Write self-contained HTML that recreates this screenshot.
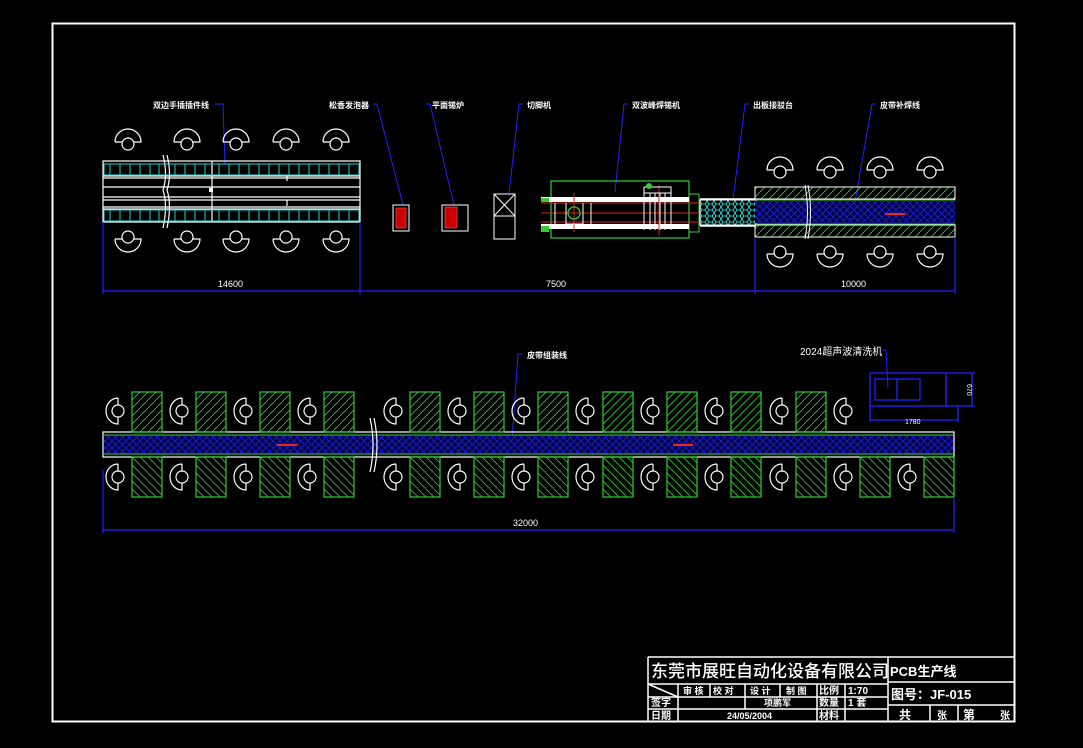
<!DOCTYPE html>
<html><head><meta charset="utf-8"><style>
html,body{margin:0;padding:0;background:#000;width:1083px;height:748px;overflow:hidden}
svg{display:block}
text{font-family:"Liberation Sans","Noto Sans CJK SC",sans-serif;fill:#fff}
.c{font-family:"Liberation Serif","Noto Serif CJK SC",serif;font-weight:bold}
</style></head><body>
<svg width="1083" height="748" viewBox="0 0 1083 748" xmlns="http://www.w3.org/2000/svg">
<defs>
<pattern id="hg" width="8" height="8" patternUnits="userSpaceOnUse"><path d="M-2 10 L10 -2" stroke="#3c3" stroke-width="0.8"/></pattern>
<pattern id="hg2" width="8" height="8" patternUnits="userSpaceOnUse"><path d="M-2 -2 L10 10" stroke="#3c3" stroke-width="0.8"/></pattern>
<pattern id="xb" width="7" height="7" patternUnits="userSpaceOnUse"><rect width="7" height="7" fill="#000040"/><path d="M0 0L7 7M7 0L0 7" stroke="#2020e0" stroke-width="0.8"/></pattern>
<pattern id="hex" width="7" height="6" patternUnits="userSpaceOnUse"><path d="M0 3 L2 0 L5 0 L7 3 L5 6 L2 6 Z" fill="none" stroke="#3ee" stroke-width="0.8"/></pattern>
<g id="hu" fill="none" stroke="#fff" stroke-width="1.2"><path d="M-13 2 A13 13 0 0 1 13 2 L6 2 M-13 2 L-6 2"/><circle cx="0" cy="4" r="6"/></g>
<g id="hd" fill="none" stroke="#fff" stroke-width="1.2"><path d="M-13 -2 A13 13 0 0 0 13 -2 L6 -2 M-13 -2 L-6 -2"/><circle cx="0" cy="-4" r="6"/></g>
<g id="hc" fill="none" stroke="#fff" stroke-width="1.2"><path d="M3 -13 A12 13 0 0 0 3 13 L3 6 M3 -13 L3 -6"/><circle cx="3" cy="0" r="6"/></g>
<rect id="gt" width="30" height="40" fill="url(#hg)" stroke="#3c3" stroke-width="1.2"/>
<rect id="gb" width="30" height="40" fill="url(#hg2)" stroke="#3c3" stroke-width="1.2"/>
</defs>
<rect x="52.5" y="23.5" width="962" height="698" fill="none" stroke="#fff" stroke-width="2"/>

<g font-size="8" class="c">
<text x="153" y="108">双边手插插件线</text>
<text x="329" y="108">松香发泡器</text>
<text x="432" y="108">平面锡炉</text>
<text x="527" y="108">切脚机</text>
<text x="632" y="108">双波峰焊锡机</text>
<text x="753" y="108">出板接驳台</text>
<text x="880" y="108">皮带补焊线</text>
<text x="527" y="358">皮带组装线</text>
</g>
<text x="800" y="355" font-size="10">2024超声波清洗机</text>
<g stroke="#22f" stroke-width="1" fill="none">
<path d="M215 104 L223 104 L225 165"/><path d="M373 104 L377 104 L403 205"/><path d="M426 104 L430 104 L454 205"/>
<path d="M523 104 L519 104 L509 194"/><path d="M628 104 L624 104 L615 192"/><path d="M749 104 L745 104 L733 200"/>
<path d="M876 104 L872 104 L855 202"/><path d="M522 354 L518 354 L512 440"/><path d="M882 350 L886 350 L888 388"/>
</g>

<g fill="none" stroke="#fff" stroke-width="1.2">
<rect x="103" y="161" width="257" height="61"/>
<path d="M103 176H360M103 178H360M103 187H360M103 197H360M103 200H360M103 207H360M103 209H360"/>
<path d="M212 161V222M287 175V181M287 200V206"/>
<path d="M163 155 Q168 175 163 190 Q168 205 163 228M167 155 Q172 175 167 190 Q172 205 167 228"/>
</g>
<rect x="104" y="164" width="255" height="11" fill="none" stroke="#2cc"/>
<rect x="104" y="210" width="255" height="11" fill="none" stroke="#2cc"/>
<g stroke="#2cc"><path d="M110 164v11M120 164v11M130 164v11M140 164v11M150 164v11M159 164v11M175 164v11M185 164v11M195 164v11M205 164v11M219 164v11M229 164v11M239 164v11M249 164v11M259 164v11M269 164v11M279 164v11M289 164v11M299 164v11M309 164v11M319 164v11M329 164v11M339 164v11M349 164v11"/>
<path d="M110 210v11M120 210v11M130 210v11M140 210v11M150 210v11M159 210v11M175 210v11M185 210v11M195 210v11M205 210v11M219 210v11M229 210v11M239 210v11M249 210v11M259 210v11M269 210v11M279 210v11M289 210v11M299 210v11M309 210v11M319 210v11M329 210v11M339 210v11M349 210v11"/></g>
<rect x="209" y="188" width="4" height="4" fill="#fff"/>
<use href="#hu" x="128" y="140"/><use href="#hu" x="187" y="140"/><use href="#hu" x="236" y="140"/><use href="#hu" x="286" y="140"/><use href="#hu" x="336" y="140"/>
<use href="#hd" x="128" y="241"/><use href="#hd" x="187" y="241"/><use href="#hd" x="236" y="241"/><use href="#hd" x="286" y="241"/><use href="#hd" x="336" y="241"/>

<rect x="393" y="205" width="16" height="26" fill="none" stroke="#fff"/><rect x="396" y="208" width="10" height="20" fill="#c00" stroke="#f55" stroke-width="0.6"/>
<rect x="442" y="205" width="26" height="26" fill="none" stroke="#fff"/><rect x="445" y="207" width="12" height="21" fill="#c00" stroke="#f55" stroke-width="0.6"/>
<g fill="none" stroke="#fff"><rect x="494" y="194" width="21" height="45"/><path d="M494 194L515 216M515 194L494 216M494 216H515"/></g>
<rect x="551" y="181" width="138" height="57" fill="none" stroke="#3c3" stroke-width="1.2"/>
<rect x="689" y="194" width="10" height="38" fill="none" stroke="#3c3"/>
<rect x="541" y="197" width="148" height="5" fill="#fff"/><rect x="541" y="224" width="148" height="5" fill="#fff"/>
<g stroke="#d22" stroke-width="1"><path d="M541 203H699M541 213H699M541 222H699M574 193V232M659 185V235"/></g>
<circle cx="574" cy="213" r="6" fill="none" stroke="#3c3" stroke-width="1.3"/>
<g fill="none" stroke="#fff"><path d="M566 203V224H583V203M555 203V224M591 203V224M644 187H671V230M644 187V230M650 193V230M655 193V230M660 193V230M665 193V230M644 193H671"/></g>
<circle cx="649" cy="186" r="3" fill="#3c3"/><rect x="541" y="198" width="8" height="4" fill="#3c3"/><rect x="541" y="226" width="8" height="6" fill="#3c3"/>
<rect x="700" y="200" width="56" height="25" fill="url(#hex)" stroke="#fff"/>
<path d="M700 199H756M700 226H756" stroke="#fff" stroke-width="1.5"/>

<rect x="755" y="187" width="200" height="12" fill="url(#hg)" stroke="#fff"/>
<rect x="755" y="225" width="200" height="12" fill="url(#hg)" stroke="#fff"/>
<rect x="755" y="201" width="200" height="22" fill="url(#xb)"/>
<path d="M755 200H955M755 224H955" stroke="#3c3"/>
<path d="M805 185 Q810 212 805 239M808 185 Q813 212 808 239" stroke="#fff" fill="none"/>
<path d="M885 214H905" stroke="#e22" stroke-width="2"/>
<use href="#hu" x="780" y="168"/><use href="#hu" x="830" y="168"/><use href="#hu" x="880" y="168"/><use href="#hu" x="930" y="168"/>
<use href="#hd" x="780" y="256"/><use href="#hd" x="830" y="256"/><use href="#hd" x="880" y="256"/><use href="#hd" x="930" y="256"/>

<g stroke="#22f" stroke-width="1.2"><path d="M103 291H955M103 222V294M360 222V294M755 237V294M955 237V294"/></g>
<g font-size="9"><text x="218" y="287">14600</text><text x="546" y="287">7500</text><text x="841" y="287">10000</text></g>

<rect x="103" y="432" width="851" height="25" fill="none" stroke="#fff" stroke-width="1.2"/>
<rect x="104" y="435" width="849" height="19" fill="url(#xb)"/>
<path d="M104 435H953M104 454H953" stroke="#3c3"/>
<path d="M370 418 Q376 445 370 472M374 418 Q380 445 374 472" stroke="#fff" fill="none" stroke-width="1.2"/>
<path d="M277 445H297M673 445H693" stroke="#e22" stroke-width="2"/>
<g>
<use href="#gt" x="132" y="392"/><use href="#gt" x="196" y="392"/><use href="#gt" x="260" y="392"/><use href="#gt" x="324" y="392"/>
<use href="#gt" x="410" y="392"/><use href="#gt" x="474" y="392"/><use href="#gt" x="538" y="392"/><use href="#gt" x="603" y="392"/><use href="#gt" x="667" y="392"/><use href="#gt" x="731" y="392"/><use href="#gt" x="796" y="392"/>
<use href="#gb" x="132" y="457"/><use href="#gb" x="196" y="457"/><use href="#gb" x="260" y="457"/><use href="#gb" x="324" y="457"/>
<use href="#gb" x="410" y="457"/><use href="#gb" x="474" y="457"/><use href="#gb" x="538" y="457"/><use href="#gb" x="603" y="457"/><use href="#gb" x="667" y="457"/><use href="#gb" x="731" y="457"/><use href="#gb" x="796" y="457"/><use href="#gb" x="860" y="457"/><use href="#gb" x="924" y="457"/>
</g>
<g>
<use href="#hc" x="115" y="411"/><use href="#hc" x="179" y="411"/><use href="#hc" x="243" y="411"/><use href="#hc" x="307" y="411"/><use href="#hc" x="393" y="411"/><use href="#hc" x="457" y="411"/><use href="#hc" x="521" y="411"/><use href="#hc" x="585" y="411"/><use href="#hc" x="650" y="411"/><use href="#hc" x="714" y="411"/><use href="#hc" x="779" y="411"/><use href="#hc" x="843" y="411"/>
<use href="#hc" x="115" y="477"/><use href="#hc" x="179" y="477"/><use href="#hc" x="243" y="477"/><use href="#hc" x="307" y="477"/><use href="#hc" x="393" y="477"/><use href="#hc" x="457" y="477"/><use href="#hc" x="521" y="477"/><use href="#hc" x="585" y="477"/><use href="#hc" x="650" y="477"/><use href="#hc" x="714" y="477"/><use href="#hc" x="779" y="477"/><use href="#hc" x="843" y="477"/><use href="#hc" x="907" y="477"/>
</g>
<g stroke="#22f" stroke-width="1.2"><path d="M103 530H954M103 470V533M954 497V533"/></g>
<text x="513" y="526" font-size="9">32000</text>

<g stroke="#22f" stroke-width="1.3" fill="none">
<rect x="870" y="373" width="76" height="33"/>
<rect x="875" y="379" width="45" height="21"/><path d="M897 379V400"/>
<path d="M946 373H975M946 406H975M972 373V406M870 406V422M958 406V422M870 420H958"/>
</g>
<text x="905" y="424" font-size="7">1780</text>
<text x="0" y="0" font-size="7" transform="translate(967 384) rotate(90)">670</text>

<g stroke="#fff" stroke-width="1.5" fill="none">
<path d="M648 657H1015M648 657V722M888 657V722M648 684H888M648 697H888M648 709H888M888 682H1015M888 705H1015"/>
<path d="M678 684V722M710 684V697M745 684V709M780 684V697M817 684V722M845 684V722M648 684L678 697M930 705V722M958 705V722"/>
</g>
<g class="c" font-size="17"><text x="651" y="677" style="font-family:'Noto Sans CJK SC',sans-serif;font-weight:500">东莞市展旺自动化设备有限公司</text></g>
<g class="c" font-size="10">
<text x="890" y="676" font-size="13">PCB生产线</text>
<text x="891" y="699" font-size="13">图号：JF-015</text>
<text x="899" y="719" font-size="12">共</text><text x="937" y="719" font-size="10">张</text><text x="963" y="719" font-size="12">第</text><text x="1000" y="719" font-size="10">张</text>
<text x="683" y="694" font-size="9">审 核</text><text x="713" y="694" font-size="9">校 对</text><text x="750" y="694" font-size="9">设 计</text><text x="786" y="694" font-size="9">制 图</text>
<text x="819" y="694">比例</text><text x="848" y="694">1:70</text>
<text x="651" y="706">签字</text><text x="764" y="706" font-size="9">项鹏军</text><text x="819" y="706">数量</text><text x="848" y="706">1 套</text>
<text x="651" y="719">日期</text><text x="727" y="719" font-size="9">24/05/2004</text><text x="819" y="719">材料</text>
</g>
</svg>
</body></html>
